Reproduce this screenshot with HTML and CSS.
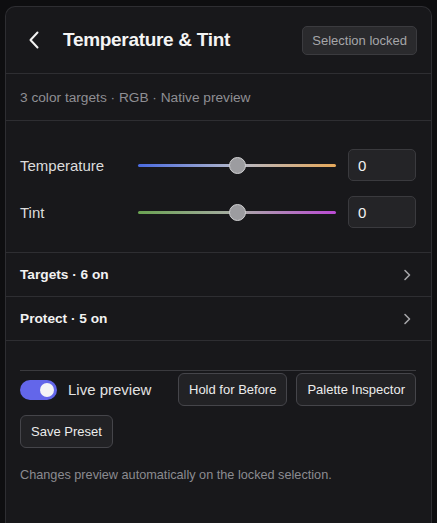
FILE: index.html
```html
<!DOCTYPE html>
<html lang="en">
<head>
    <meta charset="UTF-8">
    <meta name="viewport" content="width=device-width, initial-scale=1.0">
    <title>Temperature &amp; Tint</title>
    <link rel="stylesheet" href="styles.css">
</head>
<body>
    <div class="panel">
        <div class="header">
            <button class="back" aria-label="Back">
                <svg width="12" height="18" viewBox="0 0 12 18">
                    <path d="M9.5 1.5 L2.5 9 L9.5 16.5" fill="none" stroke="#f2f2f2" stroke-width="2" stroke-linecap="round" stroke-linejoin="round"/>
                </svg>
            </button>
            <h1>Temperature &amp; Tint</h1>
            <span class="badge">Selection locked</span>
        </div>

        <div class="subtitle">3 color targets · RGB · Native preview</div>

        <div class="sliders">
            <div class="slider-row">
                <label for="temperature">Temperature</label>
                <div class="track track-temp">
                    <span class="thumb"></span>
                </div>
                <input type="text" id="temperature" value="0">
            </div>
            <div class="slider-row">
                <label for="tint">Tint</label>
                <div class="track track-tint">
                    <span class="thumb"></span>
                </div>
                <input type="text" id="tint" value="0">
            </div>
        </div>

        <div class="collapse-row">
            <span>Targets · 6 on</span>
            <svg class="chevron" width="8" height="12" viewBox="0 0 8 12">
                <path d="M2 1.5 L6.5 6 L2 10.5" fill="none" stroke="#a5a5a8" stroke-width="1.6" stroke-linecap="round" stroke-linejoin="round"/>
            </svg>
        </div>
        <div class="collapse-row">
            <span>Protect · 5 on</span>
            <svg class="chevron" width="8" height="12" viewBox="0 0 8 12">
                <path d="M2 1.5 L6.5 6 L2 10.5" fill="none" stroke="#a5a5a8" stroke-width="1.6" stroke-linecap="round" stroke-linejoin="round"/>
            </svg>
        </div>

        <div class="footer">
            <div class="actions">
                <label class="toggle-group">
                    <span class="toggle"><span class="knob"></span></span>
                    <span class="toggle-label">Live preview</span>
                </label>
                <button class="btn">Hold for Before</button>
                <button class="btn">Palette Inspector</button>
            </div>
            <div class="actions">
                <button class="btn">Save Preset</button>
            </div>
            <p class="hint">Changes preview automatically on the locked selection.</p>
        </div>
    </div>
</body>
</html>
```

FILE: styles.css
```css
body {
    font-family: 'Liberation Sans', Arial, sans-serif;
    background-color: #0e0e10;
    color: #e6e6e6;
    margin: 0;
    padding: 6px 5px 0;
    min-height: 100vh;
    box-sizing: border-box;
}

.panel {
    background-color: #18181b;
    border: 1px solid #2e2e32;
    border-bottom: none;
    border-radius: 10px 10px 0 0;
    min-height: calc(100vh - 6px);
    box-sizing: border-box;
}

/* Шапка */
.header {
    display: flex;
    align-items: center;
    height: 66px;
    padding: 0 14px 0 22px;
    border-bottom: 1px solid #2e2e32;
}

.back {
    background: none;
    border: none;
    padding: 0;
    width: 12px;
    height: 18px;
    cursor: pointer;
}

.back svg {
    display: block;
}

.header h1 {
    margin: 0 0 0 23px;
    font-size: 19px;
    font-weight: bold;
    color: #f4f4f4;
    flex: 1;
    letter-spacing: -0.3px;
}

.badge {
    background-color: #2a2a2d;
    border: 1px solid #3b3b3f;
    border-radius: 5px;
    color: #a6a6a9;
    font-size: 13px;
    padding: 7px 9px;
    line-height: 13px;
}

.subtitle {
    height: 46px;
    display: flex;
    align-items: center;
    padding-left: 14px;
    font-size: 13.7px;
    color: #8f8f94;
    border-bottom: 1px solid #2e2e32;
}

/* Слайдеры */
.sliders {
    padding: 28px 15px 24px 14px;
    display: flex;
    flex-direction: column;
    gap: 15px;
    border-bottom: 1px solid #2e2e32;
}

.slider-row {
    display: flex;
    align-items: center;
}

.slider-row label {
    width: 118px;
    font-size: 15px;
    color: #dcdcdc;
}

.track {
    position: relative;
    width: 198px;
    height: 3px;
    border-radius: 2px;
    margin-right: 12px;
}

.track-temp {
    background: linear-gradient(to right, #4a6be2, #b4b8c8 50%, #e6a85a);
}

.track-tint {
    background: linear-gradient(to right, #6aa252, #a9aca6 50%, #ba4ad4);
}

.thumb {
    position: absolute;
    left: 50%;
    top: 50%;
    width: 15px;
    height: 15px;
    margin: -8.5px 0 0 -8.5px;
    border-radius: 50%;
    background-color: #9c9ca0;
    border: 1px solid #d0d0d2;
}

.slider-row input {
    width: 68px;
    height: 32px;
    box-sizing: border-box;
    background-color: #242427;
    border: 1px solid #3a3a3e;
    border-radius: 5px;
    color: #f2f2f2;
    font-family: inherit;
    font-size: 15px;
    padding: 0 9px;
    outline: none;
}

/* Раскрывающиеся строки */
.collapse-row {
    display: flex;
    align-items: center;
    justify-content: space-between;
    height: 43px;
    padding: 0 20px 0 14px;
    border-bottom: 1px solid #2e2e32;
    font-size: 13.7px;
    font-weight: bold;
    color: #f2f2f2;
}

.chevron {
    display: block;
}

/* Нижняя часть */
.footer {
    padding: 29px 15px 0 14px;
}

.actions {
    display: flex;
    align-items: center;
    gap: 9px;
}

.actions:first-child {
    border-top: 1px solid #3a3a3e;
    padding-top: 2px;
    margin-bottom: 9px;
}

.toggle-group {
    display: flex;
    align-items: center;
    margin-right: auto;
}

.toggle {
    position: relative;
    width: 37px;
    height: 20px;
    border-radius: 10px;
    background-color: #6366ea;
}

.knob {
    position: absolute;
    right: 3px;
    top: 3px;
    width: 14px;
    height: 14px;
    border-radius: 50%;
    background-color: #f4f4f6;
}

.toggle-label {
    margin-left: 11px;
    font-size: 15px;
    color: #e2e2e2;
}

.btn {
    background-color: #222225;
    border: 1px solid #45454a;
    border-radius: 6px;
    color: #ececec;
    font-family: inherit;
    font-size: 13px;
    height: 33px;
    padding: 0 10px;
    cursor: pointer;
}

.hint {
    margin: 20px 0 0;
    font-size: 12.7px;
    color: #8b8b90;
}
```
